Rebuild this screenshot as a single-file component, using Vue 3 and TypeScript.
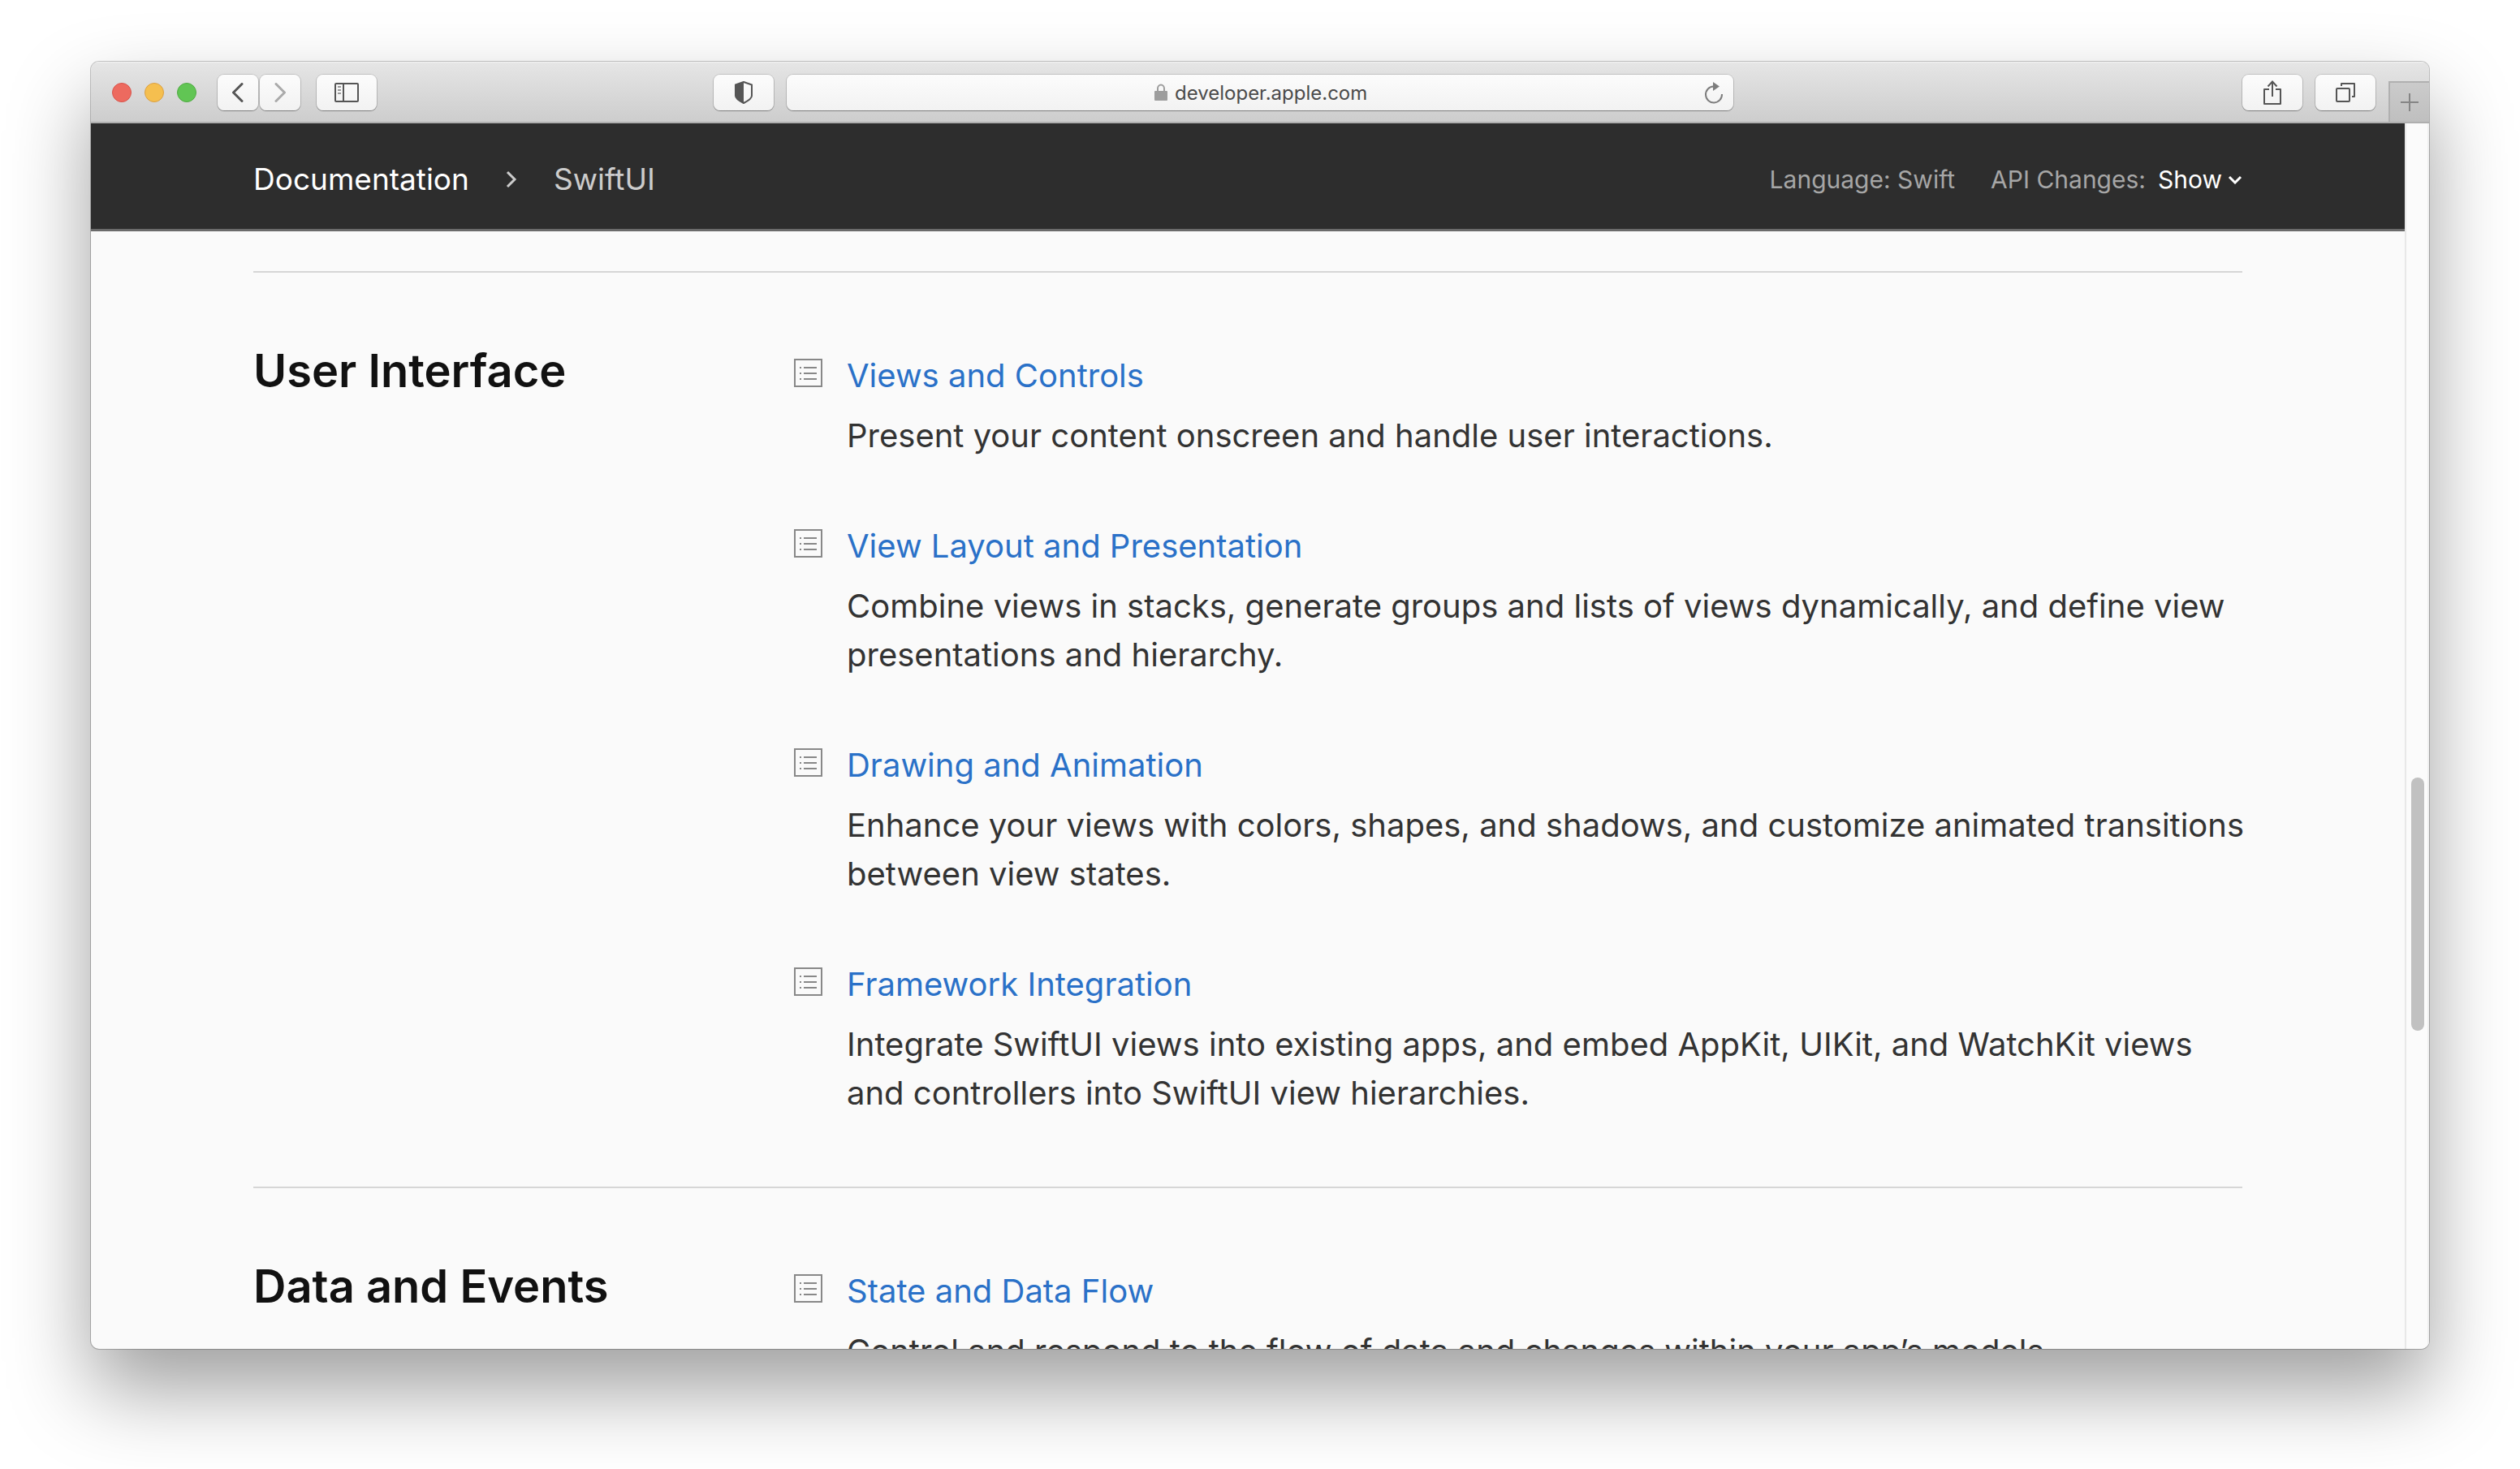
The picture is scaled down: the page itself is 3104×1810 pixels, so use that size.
<script setup lang="ts">
import { ref } from 'vue'

interface Topic {
  title: string
  text: string
}

interface Section {
  heading: string
  topics: Topic[]
}

const address = ref('developer.apple.com')
const apiChanges = ref('Show')

const sections: Section[] = [
  {
    heading: 'User Interface',
    topics: [
      {
        title: 'Views and Controls',
        text: 'Present your content onscreen and handle user interactions.',
      },
      {
        title: 'View Layout and Presentation',
        text: 'Combine views in stacks, generate groups and lists of views dynamically, and define view presentations and hierarchy.',
      },
      {
        title: 'Drawing and Animation',
        text: 'Enhance your views with colors, shapes, and shadows, and customize animated transitions between view states.',
      },
      {
        title: 'Framework Integration',
        text: 'Integrate SwiftUI views into existing apps, and embed AppKit, UIKit, and WatchKit views and controllers into SwiftUI view hierarchies.',
      },
    ],
  },
  {
    heading: 'Data and Events',
    topics: [
      {
        title: 'State and Data Flow',
        text: 'Control and respond to the flow of data and changes within your app’s models.',
      },
    ],
  },
]
</script>

<template>
  <div class="desktop">
    <div class="window">
      <header class="toolbar">
        <div class="group">
          <div class="lights">
            <button class="light red" aria-label="Close"></button>
            <button class="light yellow" aria-label="Minimize"></button>
            <button class="light green" aria-label="Zoom"></button>
          </div>
          <div class="history">
            <button class="tool narrow" aria-label="Back">
              <svg width="16" height="24" viewBox="0 0 16 24" fill="none" stroke="#555" stroke-width="3" stroke-linecap="round" stroke-linejoin="round"><path d="M13 1.5 2.5 12 13 22.5" /></svg>
            </button>
            <button class="tool narrow" aria-label="Forward">
              <svg width="16" height="24" viewBox="0 0 16 24" fill="none" stroke="#aaa" stroke-width="3" stroke-linecap="round" stroke-linejoin="round"><path d="M3 1.5 13.5 12 3 22.5" /></svg>
            </button>
          </div>
          <button class="tool" aria-label="Sidebar">
            <svg width="30" height="24" viewBox="0 0 30 24" fill="none" stroke="#555" stroke-width="2"><rect x="1" y="1" width="28" height="22" rx="1" /><path d="M11 1v22" /><path d="M4 5h4M4 9h4M4 13h4" stroke="#999" /></svg>
          </button>
        </div>

        <button class="tool shield" aria-label="Privacy Report">
          <svg width="24" height="28" viewBox="0 0 24 28"><path d="M12 1 22 4.500v13.500c0 3-5 6.500-10 9-5-2.500-10-6-10-9V4.500z" fill="none" stroke="#555" stroke-width="2" stroke-linejoin="round" /><path d="M12 1v26c-5-2.500-10-6-10-9V4.500z" fill="#555" /></svg>
        </button>

        <div class="address">
          <div class="address-text">
            <svg width="18" height="22" viewBox="0 0 18 22"><rect x="1" y="9" width="16" height="12" rx="1" fill="#9d9d9d" /><path d="M5 10V6a4 4.500 0 0 1 8 0v4" fill="none" stroke="#9d9d9d" stroke-width="2" /></svg>
            <input v-model="address" aria-label="Address" type="text" />
          </div>
          <button class="reload" aria-label="Reload">
            <svg width="24" height="28" viewBox="0 0 24 28"><path d="M11.500 6.500A10 10 0 1 0 22 16" fill="none" stroke="#7d7d7d" stroke-width="2" /><path d="M11 1v11l8-5.500z" fill="#7d7d7d" /></svg>
          </button>
        </div>

        <div class="group tail">
          <button class="tool" aria-label="Share">
            <svg width="24" height="32" viewBox="0 0 24 32" fill="none" stroke="#555" stroke-width="2"><path d="M8 12H2v18h20V12h-6" stroke-linejoin="round" /><path d="M12 21V3M6.500 8.500 12 2.500l5.500 6" /></svg>
          </button>
          <button class="tool" aria-label="Tab Overview">
            <svg width="26" height="26" viewBox="0 0 26 26" fill="none" stroke="#555" stroke-width="2"><rect x="2" y="8" width="16" height="16" rx="1" /><path d="M8 5V2h16v16h-3" stroke-linejoin="round" /></svg>
          </button>
          <button class="new-tab" aria-label="New Tab">
            <svg width="22" height="22" viewBox="0 0 22 22" stroke="#858585" stroke-width="2"><path d="M11 0v22M0 11h22" /></svg>
          </button>
        </div>
      </header>

      <div class="viewport">
        <div class="document">
          <nav class="docnav">
            <div class="crumbs">
              <a class="root" href="#">Documentation</a>
              <svg width="14" height="22" viewBox="0 0 14 22" fill="none" stroke="#ccc" stroke-width="3"><path d="M2 2l9 9-9 9" /></svg>
              <span class="current">SwiftUI</span>
            </div>
            <div class="settings">
              <span>Language: Swift</span>
              <div class="changes">
                <label for="api-changes">API Changes:</label>
                <div class="picker">
                  <select id="api-changes" v-model="apiChanges">
                    <option>Show</option>
                    <option>Hide</option>
                  </select>
                  <svg width="18" height="12" viewBox="0 0 18 12" fill="none" stroke="#fff" stroke-width="3"><path d="M2 3l7 7 7-7" /></svg>
                </div>
              </div>
            </div>
          </nav>

          <main>
            <section v-for="section in sections" :key="section.heading">
              <h2>{{ section.heading }}</h2>
              <ul>
                <li v-for="topic in section.topics" :key="topic.title">
                  <svg width="35" height="35" viewBox="0 0 35 35" fill="none" stroke="#888" stroke-width="2"><rect x="1" y="1" width="33" height="33" /><path d="M7 11h2M7 18h2M7 25h2M12 11h16M12 18h16M12 25h16" /></svg>
                  <div>
                    <a href="#">{{ topic.title }}</a>
                    <p>{{ topic.text }}</p>
                  </div>
                </li>
              </ul>
            </section>
          </main>
        </div>
        <div class="scrollbar">
          <div class="thumb"></div>
        </div>
      </div>
    </div>
  </div>
</template>

<style>
body {
  margin: 0;
  background: #fff;
}
</style>

<style scoped>
* {
  box-sizing: border-box;
}

.desktop {
  display: flex;
  height: 100vh;
  padding: 76px 112px 148px;
  overflow: hidden;
  font-family: Inter, 'Liberation Sans', sans-serif;
}

svg {
  display: block;
  flex: none;
}

button {
  display: flex;
  align-items: center;
  justify-content: center;
  padding: 0;
  border: 0;
  background: none;
}

.window {
  display: flex;
  flex: 1;
  flex-direction: column;
  min-width: 0;
  overflow: hidden;
  border-radius: 10px;
  background: #fafafa;
  box-shadow:
    0 0 0 1px rgba(0, 0, 0, 0.22),
    0 50px 100px rgba(0, 0, 0, 0.38);
}

/* Toolbar */

.toolbar {
  display: grid;
  flex: none;
  grid-template-columns: 767fr 74px 1182fr 857fr;
  height: 76px;
  padding-top: 2px;
  border-bottom: 2px solid #afafaf;
  background: linear-gradient(#f4f4f4, #e5e5e5 2px, #cdcdcd);
}

.group {
  display: flex;
  align-items: center;
  gap: 20px;
}

.lights {
  display: flex;
  gap: 16px;
  margin: 0 6px 0 26px;
}

.light {
  width: 24px;
  height: 24px;
  border: 1px solid;
  border-radius: 12px;
}

.red {
  border-color: #d9544c;
  background: #ed6a5f;
}

.yellow {
  border-color: #dba042;
  background: #f5bf4f;
}

.green {
  border-color: #50ab43;
  background: #61c554;
}

.history {
  display: flex;
  gap: 2px;
}

.tool,
.address {
  height: 44px;
  border-radius: 8px;
  background: linear-gradient(#fcfcfc, #f2f2f2);
  box-shadow:
    0 0 0 1px rgba(0, 0, 0, 0.14),
    0 1px 1px rgba(0, 0, 0, 0.3);
}

.tool {
  width: 74px;
}

.tool.narrow {
  width: 50px;
}

.shield,
.address {
  align-self: center;
}

.address {
  display: grid;
  grid-template-columns: 1fr auto 1fr;
  align-items: center;
  margin-left: 16px;
  padding: 0 12px;
}

.address-text {
  display: flex;
  grid-column: 2;
  align-items: center;
  gap: 8px;
}

.address input {
  width: 236px;
  padding: 2px 0 0;
  border: 0;
  outline: 0;
  background: none;
  color: #4b4b4b;
  font: 24px/32px Inter, 'Liberation Sans', sans-serif;
}

.reload {
  justify-self: end;
}

.tail {
  justify-content: flex-end;
  gap: 16px;
}

.new-tab {
  align-self: flex-end;
  width: 50px;
  height: 50px;
  border-top: 2px solid #b0b0b0;
  border-left: 2px solid #b0b0b0;
  background: linear-gradient(#cbcbcb, #bfbfbf);
}

/* Page */

.viewport {
  display: flex;
  flex: 1;
  min-height: 0;
}

.document {
  flex: 1;
  min-width: 0;
  overflow: hidden;
}

.docnav {
  display: flex;
  align-items: center;
  justify-content: space-between;
  height: 133px;
  padding: 8px 200px 0;
  border-bottom: 3px solid #6b6b6b;
  background: #2d2d2d;
}

.crumbs {
  display: flex;
  align-items: center;
  gap: 45px;
  font-size: 37px;
  line-height: 44px;
}

.root {
  color: #fff;
  text-decoration: none;
}

.current {
  color: #ccc;
}

.settings {
  display: flex;
  align-items: center;
  gap: 44px;
  color: #a6a6a6;
  font-size: 30px;
  line-height: 36px;
}

.changes,
.picker {
  display: flex;
  align-items: center;
}

.changes {
  gap: 15px;
}

.picker {
  gap: 7px;
}

select {
  padding: 0;
  border: 0;
  outline: 0;
  appearance: none;
  background: none;
  color: #fff;
  font: 30px/36px Inter, 'Liberation Sans', sans-serif;
}

main {
  padding: 49px 200px 0;
}

section {
  display: grid;
  grid-template-columns: 666px 1fr;
  padding: 97px 0 85px;
  border-top: 2px solid #d6d6d6;
}

h2 {
  margin: 0;
  color: #111;
  font-size: 56px;
  font-weight: 600;
  line-height: 48px;
}

ul {
  display: grid;
  gap: 76px;
  margin: 0 -8px 0 0;
  padding: 0;
  list-style: none;
}

li {
  display: flex;
  gap: 30px;
}

li svg {
  margin-top: 9px;
}

li a {
  display: block;
  color: #2a71c8;
  font-size: 40px;
  line-height: 60px;
  text-decoration: none;
}

p {
  margin: 14px 0 0;
  color: #333;
  font-size: 40px;
  line-height: 60px;
}

.scrollbar {
  display: grid;
  flex: none;
  grid-template-rows: 806fr 312fr 392fr;
  width: 30px;
  padding: 0 4px 0 6px;
  border-right: 2px solid #f0f0f0;
  border-left: 2px solid #e8e8e8;
  background: #fbfbfb;
}

.thumb {
  grid-row: 2;
  border-radius: 8px;
  background: #c1c1c1;
}
</style>
